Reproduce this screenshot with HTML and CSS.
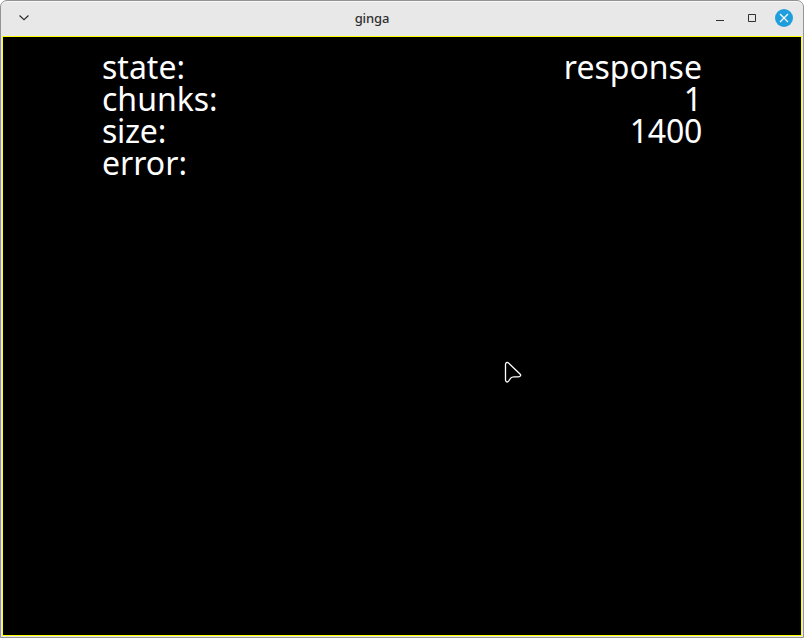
FILE: index.html
```html
<!DOCTYPE html>
<html lang="en">
<head>
<meta charset="utf-8">
<title>ginga</title>
<link rel="stylesheet" href="styles.css">
</head>
<body>
<div class="window">
  <header class="titlebar">
    <svg class="menu" width="12" height="8" viewBox="0 0 12 8"><path d="M1.500 1.500 6 5.700l4.500-4.200"/></svg>
    <h1 class="title">ginga</h1>
    <div class="controls">
      <svg width="18" height="18" viewBox="0 0 18 18"><path d="M5 11.500h8"/></svg>
      <svg width="18" height="18" viewBox="0 0 18 18"><path d="M5.500 5.500h7v7h-7z"/></svg>
      <svg class="close" width="18" height="18" viewBox="0 0 18 18"><circle cx="9" cy="9" r="9"/><path d="m5 5 8 8m0-8-8 8"/></svg>
    </div>
  </header>
  <main class="screen">
    <dl class="stats">
      <div class="row"><dt>state:</dt><dd>response</dd></div>
      <div class="row"><dt>chunks:</dt><dd>1</dd></div>
      <div class="row tight"><dt>size:</dt><dd>1400</dd></div>
      <div class="row"><dt>error:</dt><dd></dd></div>
    </dl>
  </main>
  <svg class="cursor" width="20" height="24" viewBox="0 0 20 24"><path d="M2.500 4.500v15.500c0 2 2 2.700 3.200 1l2-2.800c.8-1 1.800-1.400 3.200-1.400h4.500c2.200 0 2.900-1.700 1.600-2.900L5.500 3C4 1.800 2.500 2.700 2.500 4.500z"/></svg>
</div>
</body>
</html>
```
FILE: styles.css
```css
* { box-sizing: border-box; }
body { margin: 0; background: #fff; }
.window {
  position: relative;
  display: flex;
  flex-direction: column;
  width: 804px;
  height: 638px;
  border: 1px solid #939393;
  border-radius: 7px 7px 0 0;
  background: #e8e8e8;
  box-shadow: inset 0 1px #f8f8f8;
  overflow: hidden;
}
.titlebar {
  display: flex;
  align-items: center;
  height: 35px;
  padding: 0 10px 1px 17px;
}
.titlebar svg { fill: none; stroke: #303030; }
.titlebar .menu { stroke-width: 1.2; }
.title {
  flex: 1;
  margin: 0;
  padding-left: 3px;
  font: 500 13px/18px "Noto Sans", sans-serif;
  letter-spacing: -0.1px;
  color: #303030;
  text-align: center;
}
.controls { display: flex; gap: 14px; }
.titlebar .close circle { fill: #1f9ede; stroke: none; }
.titlebar .close path { stroke: #fff; stroke-width: 1.2; }
.screen {
  flex: 1;
  margin: 0 1px 1px;
  border: 1px solid #ffff00;
  background: #000;
  padding: 14px 99px;
}
.stats { margin: 0; font: 32px/32px "Noto Sans", sans-serif; color: #fff; }
.row { display: flex; justify-content: space-between; height: 32px; }
.row dd { margin: 0; }
.tight { letter-spacing: -0.25px; }
.cursor { position: absolute; left: 502px; top: 359px; fill: #000; stroke: #fff; stroke-width: 1.3; }
```
